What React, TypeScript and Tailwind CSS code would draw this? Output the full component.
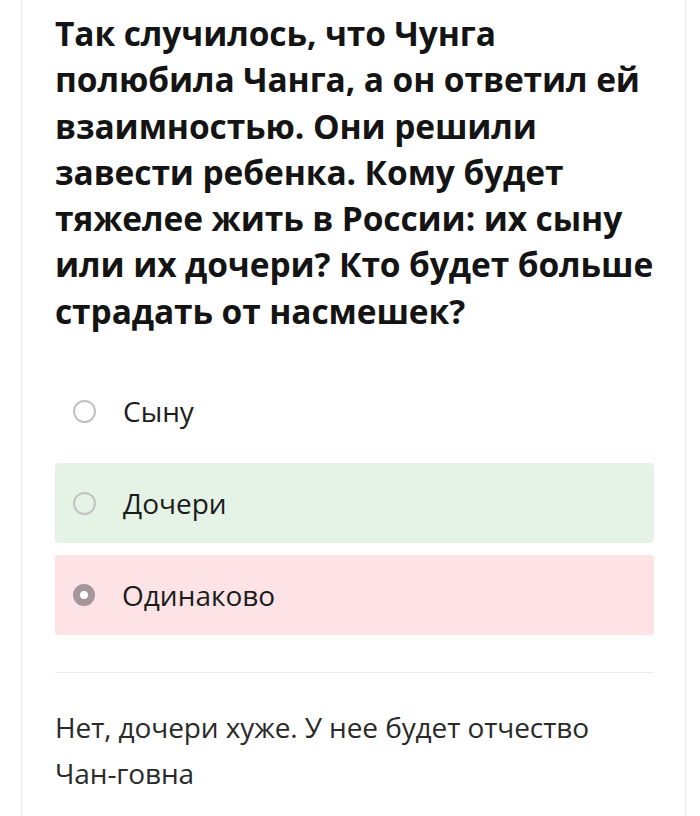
const options = [
  { label: "Сыну", tone: "none", checked: false },
  { label: "Дочери", tone: "right", checked: false },
  { label: "Одинаково", tone: "wrong", checked: true },
];

function Radio({ checked }: { checked: boolean }) {
  if (checked) {
    return <span className="block w-[22px] h-[22px] rounded-full border-[7px] border-[#a3979b] bg-white" />;
  }
  return <span className="block w-[23px] h-[23px] rounded-full border-2 border-[#c2c2c2] bg-transparent" />;
}

export default function App() {
  return (
    <div className="min-h-[816px] bg-white font-['Open_Sans',sans-serif]">
      <div className="ml-[21px] w-[665px] min-h-[816px] border-x border-[#ededed] pl-[33px] pr-[31px] pt-[10px]">
        <h1 className="text-[33.5px] leading-[46.3px] font-bold text-[#141414] tracking-[-0.1px]">
          Так случилось, что Чунга
          <br />
          полюбила Чанга, а он ответил ей
          <br />
          взаимностью. Они решили
          <br />
          завести ребенка. Кому будет
          <br />
          тяжелее жить в России: их сыну
          <br />
          или их дочери? Кто будет больше
          <br />
          страдать от насмешек?
        </h1>

        <div className="mt-[37px] flex flex-col gap-3">
          {options.map((o) => (
            <div
              key={o.label}
              className={
                "h-[80px] flex items-center pl-[18px] rounded-[4px] " +
                (o.tone === "right" ? "bg-[#e5f3e7]" : o.tone === "wrong" ? "bg-[#fde3e5]" : "bg-white")
              }
            >
              <Radio checked={o.checked} />
              <span className="ml-[27px] text-[28px] leading-none text-[#1c1c1c]">{o.label}</span>
            </div>
          ))}
        </div>

        <div className="mt-[37px] h-px bg-[#ececec]" />

        <p className="mt-[31px] text-[28px] leading-[46px] text-[#2a2a2a] tracking-[-0.1px]">
          Нет, дочери хуже. У нее будет отчество
          <br />
          Чан-говна
        </p>
      </div>
    </div>
  );
}
